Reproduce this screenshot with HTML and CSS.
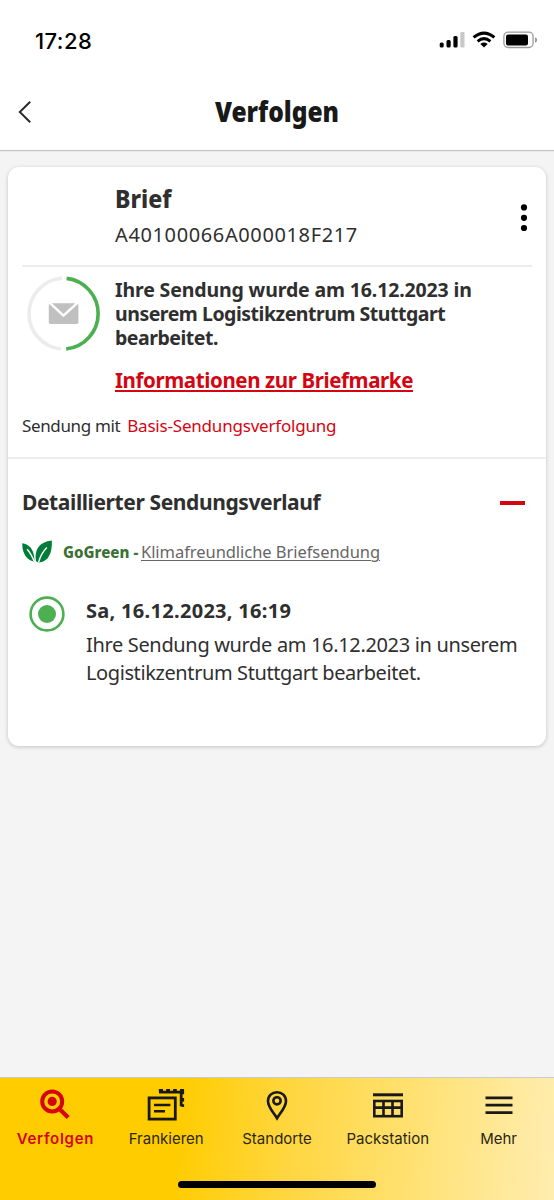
FILE: index.html
```html
<!DOCTYPE html>
<html lang="de">
<head>
<meta charset="utf-8">
<title>Verfolgen</title>
<link rel="stylesheet" href="styles.css">
</head>
<body>
<div class="app">
  <div class="status">
    <span class="time">17:28</span>
    <svg class="status-icons" width="99" height="18" viewBox="0 0 99 18">
      <rect x="0.7" y="11.6" width="4" height="5" rx="1.5"/>
      <rect x="7.5" y="9" width="4.2" height="7.6" rx="1.5"/>
      <rect x="14.4" y="5" width="4.2" height="11.6" rx="1.5"/>
      <rect x="21.3" y="1" width="4.2" height="15.6" rx="1.3" fill="#c8c8c8"/>
      <g fill="none" stroke="#000" stroke-width="3">
        <path d="M34.6 6.4Q45 -2.2 55.4 6.4"/>
        <path d="M38.6 10.3Q45 5 51.4 10.3"/>
      </g>
      <path d="M41.3 13Q45 10.1 48.7 13L45 16.6Z"/>
      <rect x="64.9" y="1.2" width="29.2" height="15.3" rx="4.2" fill="none" stroke="#9b9b9b" stroke-width="1.3"/>
      <rect x="67" y="3.4" width="22" height="11" rx="2"/>
      <path d="M96 6.3Q98.2 7 98.2 9T96 11.7Z" fill="#9b9b9b"/>
    </svg>
  </div>
  <header class="header">
    <svg class="back" width="16" height="24" viewBox="0 0 16 24"><path d="M13.2 1.8L2.8 12L13.2 22.2" fill="none" stroke="#262626" stroke-width="1.9"/></svg>
    <h1 class="title">Verfolgen</h1>
  </header>
  <main class="main">
    <section class="card">
      <div class="card-head">
        <div>
          <h2 class="kind">Brief</h2>
          <div class="code">A40100066A000018F217</div>
        </div>
        <svg class="menu" width="8" height="30" viewBox="0 0 8 30"><circle cx="4" cy="4.4" r="3.1"/><circle cx="4" cy="14.8" r="3.1"/><circle cx="4" cy="25" r="3.1"/></svg>
      </div>
      <div class="summary">
        <svg class="ring" width="76" height="76" viewBox="0 0 76 76">
          <g fill="none" stroke-width="3.6">
            <path d="M35.8 2.3A35.5 35.5 0 0 0 34.8 73" stroke="#ececec"/>
            <path d="M40.6 2.4A35.5 35.5 0 0 1 40.2 73" stroke="#4caf50"/>
          </g>
          <rect x="22.8" y="27.2" width="29.6" height="20.8" rx="1.8" fill="#c0c0c0"/>
          <path d="M23 26.2L37.5 39.6L52.2 26.2" fill="none" stroke="#fff" stroke-width="2.5"/>
        </svg>
        <div>
          <p class="state"><span class="state-a">Ihre Sendung wurde am 16.12.2023 in</span> <span class="state-b">unserem Logistikzentrum Stuttgart</span> <span class="state-b">bearbeitet.</span></p>
          <a class="stamp">Informationen zur Briefmarke</a>
        </div>
      </div>
      <div class="product"><span class="product-label">Sendung mit</span><a class="product-link">Basis-Sendungsverfolgung</a></div>
      <div class="history">
        <div class="history-head"><h3 class="history-title">Detaillierter Sendungsverlauf</h3><i class="minus"></i></div>
        <div class="green">
          <svg class="leaf" width="32" height="24" viewBox="0 0 32 24">
            <path d="M.2 3.2C7 4.3 12.6 8.6 12.4 21.8C6 20 .2 15.4.2 3.2Z" fill="#007c39"/>
            <path d="M29.8.5C30.4 12.5 26.8 21.4 17.2 22.4C15.9 22.4 14.5 21.8 13.9 21C12.2 9.6 17.2 1.8 29.8.5Z" fill="#007c39"/>
            <path d="M5.1 9.3Q9 13.5 12.4 21.8M24.8 7.5Q18.8 13.8 16.6 22.3" fill="none" stroke="#fff" stroke-width="1.4"/>
          </svg>
          <b class="gogreen">GoGreen -</b><a class="climate">Klimafreundliche Briefsendung</a>
        </div>
        <div class="event">
          <svg class="dot" width="36" height="36" viewBox="0 0 36 36"><circle cx="18" cy="18" r="16.4" fill="none" stroke="#4caf50" stroke-width="2.6"/><circle cx="18" cy="18" r="9" fill="#4caf50"/></svg>
          <div>
            <div class="when">Sa, 16.12.2023, 16:19</div>
            <p class="what"><span class="what-a">Ihre Sendung wurde am 16.12.2023 in unserem</span> <span class="what-b">Logistikzentrum Stuttgart bearbeitet.</span></p>
          </div>
        </div>
      </div>
    </section>
  </main>
  <footer class="bottom">
    <nav class="tabs">
      <a class="tab active">
        <svg width="40" height="36" viewBox="0 0 40 36" fill="none" stroke="#d40511"><circle cx="17.2" cy="14.4" r="10" stroke-width="4"/><circle cx="17.2" cy="14.4" r="4.6" fill="#d40511" stroke="none"/><path d="M24 21.4L33.2 30.6" stroke-width="4.2"/></svg>
        <span>Verfolgen</span>
      </a>
      <a class="tab">
        <svg width="40" height="36" viewBox="0 0 40 36" fill="none" stroke="#191919"><rect x="3.1" y="10.9" width="26.2" height="21.2" stroke-width="2.8"/><path d="M8 18H24.4M8 24.2H19" stroke-width="2.6"/><path d="M13 5.2H36M35.2 5V19.2" stroke-width="2.8"/><path d="M12.8 3.3H17M20.2 3.3H24M27.1 3.3H30.8M34 3.3H38M36.8 3V7.2M36.8 11V14.4M36.8 17.2V20" stroke-width="2.6"/></svg>
        <span>Frankieren</span>
      </a>
      <a class="tab">
        <svg width="40" height="36" viewBox="0 0 40 36" fill="none" stroke="#191919" stroke-width="2.6"><path d="M20 31.3C16.8 26 11 20 11 14.2C11 8.8 15 5.2 20 5.2S29 8.8 29 14.2C29 20 23.2 26 20 31.3Z"/><circle cx="20" cy="13.8" r="3.6"/></svg>
        <span>Standorte</span>
      </a>
      <a class="tab">
        <svg width="40" height="36" viewBox="0 0 40 36" fill="none" stroke="#191919" stroke-width="2.6"><path d="M5 7.8H35" stroke-width="3"/><rect x="6.3" y="14" width="27.4" height="15.2"/><path d="M6 20.6H34M15.5 14V29M24.5 14V29"/></svg>
        <span>Packstation</span>
      </a>
      <a class="tab">
        <svg width="40" height="36" viewBox="0 0 40 36" fill="none" stroke="#191919" stroke-width="2.7"><path d="M6.5 10.8H33.5M6.5 18.2H33.5M6.5 25.7H33.5"/></svg>
        <span>Mehr</span>
      </a>
    </nav>
    <div class="home"></div>
  </footer>
</div>
</body>
</html>
```

FILE: styles.css
```css
* { box-sizing: border-box; }
body { margin: 0; font-family: "Noto Sans", sans-serif; color: #2f2f2f; background: #f4f4f4; }
h1, h2, h3, p { margin: 0; }
svg { display: block; flex: none; }
span, a { white-space: nowrap; }

.app { display: flex; flex-direction: column; height: 1200px; }
.status { display: flex; justify-content: space-between; align-items: flex-start; height: 72px; padding: 27px 16px 0 35px; background: #fff; }
.time { font: 550 22px/28px Inter, sans-serif; letter-spacing: .45px; color: #000; }
.status-icons { margin-top: 4px; }
.header { display: grid; grid-template-columns: 16px 1fr 16px; align-items: center; height: 79px; padding: 0 17px; background: #fff; border-bottom: 1px solid #c2c2c2; }
.back { margin-top: 2px; }
.title { margin-top: -1px; font-size: 28px; line-height: 40px; font-weight: 900; text-align: center; color: #191919; transform: scaleX(.875); }

.main { flex: 1; padding: 15px 8px 0; border-top: 1px solid #ebebeb; }
.card { height: 579px; background: #fff; border-radius: 11px; box-shadow: 0 1px 4px rgba(0, 0, 0, .2); }
.card-head { display: flex; justify-content: space-between; height: 100px; margin: 0 14px; padding: 16px 4px 0 93px; border-bottom: 2px solid #ededed; }
.kind { font-size: 25px; line-height: 30px; font-weight: 800; transform: scaleX(.925); transform-origin: 0 0; }
.code { margin-top: 8px; font-size: 20px; line-height: 28px; letter-spacing: .62px; }
.menu { margin-top: 20px; fill: #000; }
.summary { display: flex; gap: 5px; height: 147px; padding: 9px 0 0 18px; align-items: flex-start; }
.summary > div { padding-left: 8px; margin-top: 2px; }
.state { font-size: 19.5px; line-height: 24px; font-weight: 700; }
.state span, .what span { display: block; }
.state-a { letter-spacing: -.14px; }
.state-b { letter-spacing: -.48px; }
.stamp { display: block; margin-top: 16px; width: max-content; font-size: 20.5px; line-height: 28px; font-weight: 700; letter-spacing: -.39px; color: #d40511; text-decoration: underline; text-decoration-thickness: 1.5px; text-underline-offset: 2px; text-decoration-skip-ink: none; }
.product { display: flex; gap: 7px; height: 45px; padding-left: 14px; border-bottom: 2px solid #ededed; font-size: 17px; line-height: 24px; }
.product-label { letter-spacing: -.36px; }
.product-link { letter-spacing: -.2px; color: #d40511; }
.history { padding: 28px 14px 0; }
.history-head { display: flex; justify-content: space-between; align-items: center; padding-right: 7px; }
.history-title { font-size: 21px; line-height: 30px; font-weight: 700; letter-spacing: -.4px; }
.minus { width: 25px; height: 4px; margin-top: 2px; background: #d40511; }
.green { display: flex; margin-top: 23px; font-size: 16.5px; line-height: 24px; }
.gogreen { margin-left: 9px; width: 78px; font-weight: 800; color: #3a7233; white-space: nowrap; transform: scaleX(.915); transform-origin: 0 0; }
.climate { color: #666; letter-spacing: -.05px; text-decoration: underline; text-decoration-thickness: 1.2px; text-underline-offset: 2px; }
.event { display: flex; gap: 21px; margin-top: 32px; padding-left: 7px; font-size: 20px; line-height: 28px; }
.event > div { margin-top: 1px; }
.when { font-weight: 700; letter-spacing: .3px; white-space: nowrap; }
.what { margin-top: 6px; }
.what-a { letter-spacing: -.34px; }
.what-b { letter-spacing: -.4px; }

.bottom { height: 123px; border-top: 1px solid #cacaca; background: linear-gradient(94deg, #fc0 32%, #ffd640 52%, #ffe06d 72%, #ffedb0 100%); }
.tabs { display: grid; grid-template-columns: repeat(5, 1fr); padding-top: 9px; }
.tab { display: flex; flex-direction: column; align-items: center; gap: 6px; font: 400 15px/20px Inter, sans-serif; color: #2b2714; }
.tab.active { font-weight: 600; letter-spacing: .7px; color: #d40511; }
.home { width: 198px; height: 7px; margin: 32px auto 0; border-radius: 4px; background: #000; }
```
